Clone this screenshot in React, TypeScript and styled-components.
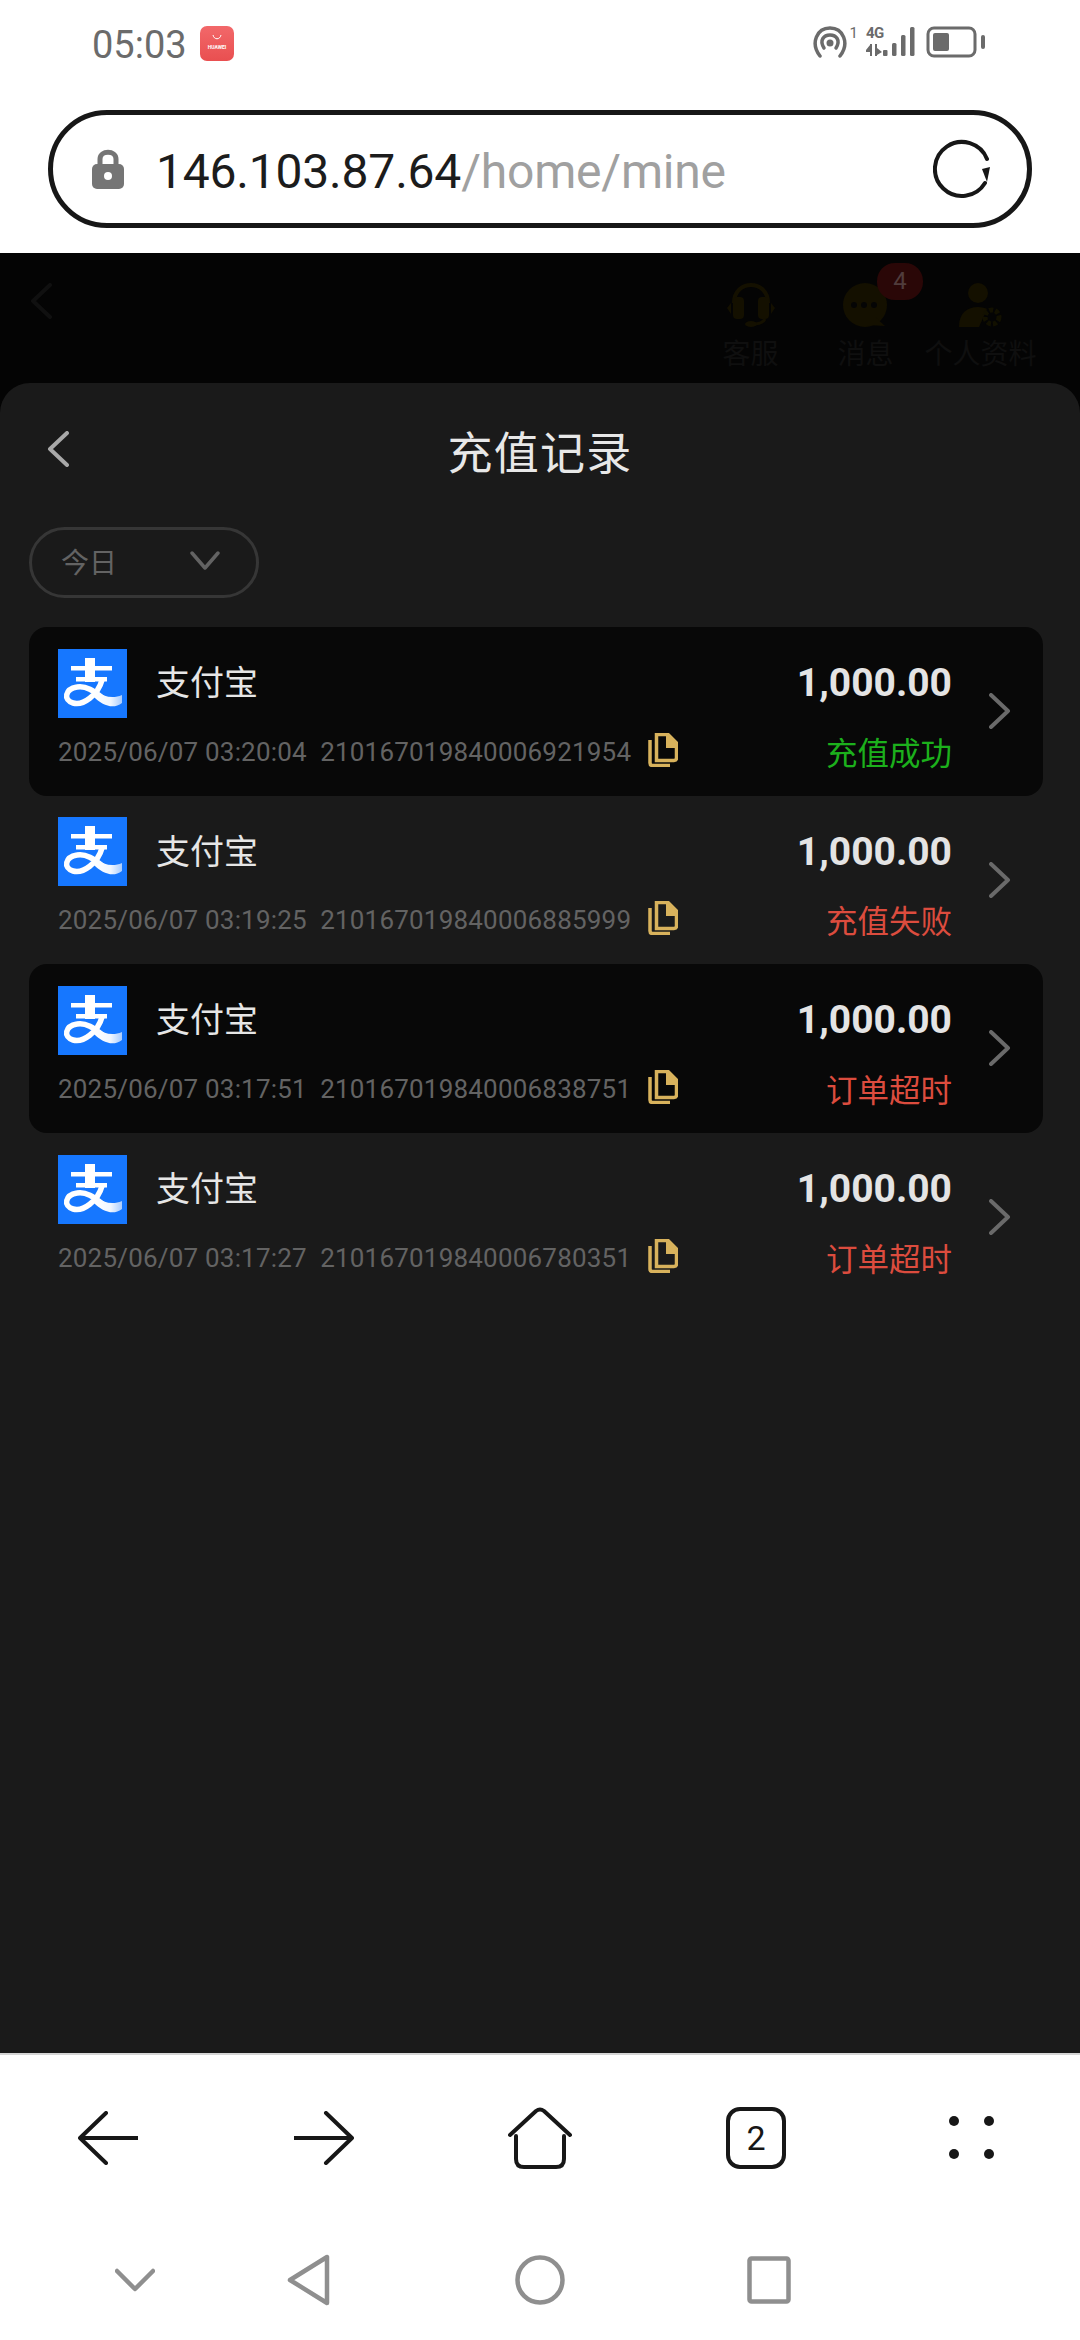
import styled, { createGlobalStyle } from 'styled-components';

const GlobalStyle = createGlobalStyle`
    html, body {
        margin: 0;
        padding: 0;
        background: #fff;
    }
    * {
        box-sizing: border-box;
    }
`;

const FONT = `Roboto, 'Noto Sans CJK SC', sans-serif`;

const Page = styled.div`
    width: 1080px;
    height: 2340px;
    display: flex;
    flex-direction: column;
    font-family: ${FONT};
    background: #fff;
    overflow: hidden;
`;

const StatusBar = styled.div`
    height: 88px;
    padding: 23px 0 0 92px;
    display: flex;
    align-items: flex-start;
`;

const Clock = styled.span`
    font-size: 38px;
    line-height: 44px;
    color: #6b6b6b;
    width: 108px;
`;

const AppBadge = styled.div`
    width: 34px;
    height: 35px;
    margin-top: 3px;
    border-radius: 7px;
    background: linear-gradient(#f2686a, #e94f50);
    color: #fff;
    font-size: 5px;
    font-weight: 700;
    line-height: 6px;
    display: flex;
    flex-direction: column;
    align-items: center;
    padding-top: 8px;
    gap: 4px;
`;

const StatusRight = styled.div`
    margin-left: auto;
    margin-right: 94px;
    margin-top: 3px;
    display: flex;
    align-items: flex-start;
`;

const UrlRow = styled.div`
    height: 165px;
    padding: 22px 48px 0 48px;
`;

const UrlBar = styled.div`
    height: 118px;
    border: 5px solid #171717;
    border-radius: 59px;
    display: flex;
    align-items: center;
    padding: 0 34px 0 39px;
`;

const UrlText = styled.div`
    margin-left: 32px;
    padding-top: 6px;
    font-size: 48px;
    line-height: 60px;
    letter-spacing: -0.2px;
    color: #a0a0a0;
    flex: 1;
    b {
        font-weight: 400;
        color: #1c1c1c;
    }
`;

const Backdrop = styled.div`
    height: 130px;
    background: #040404;
    display: flex;
    padding: 30px 42px 0 30px;
`;

const BackdropActions = styled.div`
    margin-left: auto;
    display: flex;
`;

const BackdropAction = styled.div<{ $width: number }>`
    width: ${(p) => p.$width}px;
    display: flex;
    flex-direction: column;
    align-items: center;
    gap: 10px;
    font-size: 28px;
    line-height: 36px;
    color: #0f0f0f;
    position: relative;
`;

const DimBadge = styled.span`
    position: absolute;
    left: 69px;
    top: -20px;
    width: 46px;
    height: 37px;
    border-radius: 18px;
    background: #2a0707;
    color: #503c3c;
    font-size: 24px;
    line-height: 37px;
    text-align: center;
`;

const Sheet = styled.div`
    flex: 1;
    background: #1a1a1a;
    border-radius: 30px 30px 0 0;
    padding: 0 37px 0 29px;
    display: flex;
    flex-direction: column;
`;

const SheetOuter = styled.div`
    flex: 1;
    display: flex;
    flex-direction: column;
    background: #040404;
`;

const SheetHeader = styled.div`
    height: 144px;
    display: flex;
    align-items: center;
    position: relative;
`;

const BackButton = styled.div`
    position: absolute;
    left: 18px;
    top: 48px;
    width: 22px;
    height: 36px;
`;

const Title = styled.h1`
    margin: 0 auto;
    padding: 0 0 0 8px;
    font-size: 45px;
    line-height: 56px;
    font-weight: 400;
    color: #e8e8e8;
    letter-spacing: 1.2px;
`;

const Filter = styled.div`
    width: 230px;
    height: 71px;
    border: 3px solid #363636;
    border-radius: 36px;
    display: flex;
    align-items: center;
    padding: 0 36px 3px 29px;
    justify-content: space-between;
    font-size: 28px;
    color: #636363;
`;

const List = styled.div`
    margin-top: 29px;
    display: flex;
    flex-direction: column;
`;

const Row = styled.div<{ $shaded: boolean }>`
    height: 168.6px;
    border-radius: 18px;
    background: ${(p) => (p.$shaded ? '#080808' : 'transparent')};
    display: flex;
    align-items: center;
    padding: 0 32px 0 29px;
`;

const RowBody = styled.div`
    flex: 1;
    display: flex;
    flex-direction: column;
    gap: 12px;
`;

const RowLine = styled.div`
    display: flex;
    align-items: center;
`;

const Method = styled.span`
    margin-left: 29px;
    font-size: 34px;
    line-height: 44px;
    color: #e6e6e6;
`;

const Amount = styled.span`
    margin-left: auto;
    font-size: 39px;
    font-weight: 700;
    line-height: 44px;
    color: #e4e4e4;
`;

const Meta = styled.span`
    font-size: 26px;
    line-height: 38px;
    letter-spacing: 0.2px;
    color: #636363;
    white-space: pre;
`;

const CopyButton = styled.span`
    margin: 0 0 4px 17px;
    width: 30px;
    height: 34px;
    display: flex;
`;

const StateLabel = styled.span<{ $ok: boolean }>`
    margin: 6px 0 0 auto;
    font-size: 31.5px;
    line-height: 38px;
    color: ${(p) => (p.$ok ? '#1cb01c' : '#dc4c3e')};
`;

const RowArrow = styled.span`
    margin-left: 37px;
    width: 22px;
    height: 36px;
    display: flex;
`;

const BottomBar = styled.div`
    height: 287px;
    background: #fff;
    border-top: 2px solid #d4d4d4;
    display: flex;
    flex-direction: column;
`;

const Toolbar = styled.div`
    height: 178px;
    display: grid;
    grid-template-columns: repeat(5, 216px);
    align-items: center;
    justify-items: center;
    padding-bottom: 12px;
`;

const NavKeys = styled.div`
    height: 107px;
    display: grid;
    grid-template-columns: 270px 78px 384px 74px;
    align-items: center;
    justify-items: center;
    padding-bottom: 14px;
`;

const TabCount = styled.div`
    width: 60px;
    height: 62px;
    border: 4px solid #171717;
    border-radius: 14px;
    font-size: 34px;
    line-height: 54px;
    text-align: center;
    color: #171717;
`;

const SmallLabel = styled.span`
    font-size: 15px;
    line-height: 15px;
    color: #6b6b6b;
    margin: 0 0 0 2px;
`;

const NetLabel = styled.span`
    font-size: 15px;
    line-height: 15px;
    font-weight: 700;
    letter-spacing: -0.5px;
    color: #6b6b6b;
`;

const NetColumn = styled.div`
    display: flex;
    flex-direction: column;
    gap: 3px;
    margin-left: 8px;
    width: 17px;
`;

const BatterySlot = styled.span`
    margin-left: 11px;
    display: flex;
`;

const orders = [
    { time: '2025/06/07 03:20:04', no: '210167019840006921954', state: '充值成功', ok: true },
    { time: '2025/06/07 03:19:25', no: '210167019840006885999', state: '充值失败', ok: false },
    { time: '2025/06/07 03:17:51', no: '210167019840006838751', state: '订单超时', ok: false },
    { time: '2025/06/07 03:17:27', no: '210167019840006780351', state: '订单超时', ok: false }
];

function AlipayLogo({ index }: { index: number }) {
    const tail = `ali-tail-${index}`;
    return (
        <svg width='69' height='69' viewBox='0 0 69 69'>
            <defs>
                <linearGradient id={tail} x1='0' x2='1' y1='0' y2='0'>
                    <stop offset='0' stopColor='#fff' />
                    <stop offset='0.6' stopColor='#f0f6ff' />
                    <stop offset='1' stopColor='#a8ccff' />
                </linearGradient>
            </defs>
            <rect width='69' height='69' fill='#1677ff' />
            <rect x='13' y='17' width='41' height='4.5' fill='#fff' />
            <rect x='18' y='28' width='31' height='4.5' fill='#fff' />
            <rect x='27' y='9' width='10' height='24' fill='#fff' />
            <path
                d='M44 31 C40 46 25 57 15 54 C5 51 7 40 19 38 C29 36 38 44 46 50'
                fill='none'
                stroke='#fff'
                strokeWidth='5.5'
            />
            <path d='M38 42 C46 48 55 50 64 46 L64 54 C55 61 44 56 36 48 Z' fill={`url(#${tail})`} />
        </svg>
    );
}

function CopyIcon() {
    return (
        <svg width='30' height='34' viewBox='0 0 30 34' fill='none'>
            <path d='M2 7 V30 Q2 32.5 4.5 32.5 H22' stroke='#d8b25c' strokeWidth='3.5' />
            <path d='M8.5 1.5 H20 L28.5 10 V25 Q28.5 27.5 26 27.5 H8.5 Z' stroke='#d8b25c' strokeWidth='3.5' />
            <path d='M18 1 L29 11 V15 H18 Z' fill='#d8b25c' />
        </svg>
    );
}

function Chevron({ color, dir, width = 4 }: { color: string; dir: 'left' | 'right'; width?: number }) {
    const d = dir === 'left' ? 'M20 2 L3 18 L20 34' : 'M2 2 L19 18 L2 34';
    return (
        <svg width='22' height='36' viewBox='0 0 22 36' fill='none'>
            <path d={d} stroke={color} strokeWidth={width} strokeLinecap='round' strokeLinejoin='round' />
        </svg>
    );
}

function HeadsetIcon() {
    return (
        <svg width='52' height='44' viewBox='0 0 52 44' fill='none'>
            <path d='M9 20 C9 -4 43 -4 43 20' stroke='#141000' strokeWidth='4' />
            <rect x='8' y='14' width='11' height='22' rx='4' fill='#141000' />
            <rect x='33' y='14' width='11' height='22' rx='4' fill='#141000' />
            <path d='M2 25 L6 20 V31 Z M50 25 L46 20 V31 Z' fill='#141000' />
            <path d='M40 36 C38 40 34 41 28 41' stroke='#141000' strokeWidth='3' />
            <ellipse cx='26' cy='41' rx='6' ry='3' fill='#141000' />
        </svg>
    );
}

function ChatIcon() {
    return (
        <svg width='46' height='44' viewBox='0 0 46 44'>
            <circle cx='22' cy='22' r='22' fill='#141000' />
            <path d='M32 34 L42 43 L24 42 Z' fill='#141000' />
            <circle cx='11' cy='22' r='3' fill='#050505' />
            <circle cx='21' cy='22' r='3' fill='#050505' />
            <circle cx='31' cy='22' r='3' fill='#050505' />
        </svg>
    );
}

function PersonIcon() {
    return (
        <svg width='44' height='44' viewBox='0 0 44 44'>
            <circle cx='19' cy='10' r='10' fill='#141000' />
            <path d='M0 44 C0 30 8 24 19 24 C23 24 26 25 28 26 L20 44 Z' fill='#141000' />
            <circle cx='33' cy='34' r='7' fill='none' stroke='#121000' strokeWidth='5' strokeDasharray='4 2' />
        </svg>
    );
}

function HotspotIcon() {
    return (
        <svg width='36' height='32' viewBox='0 0 36 32' fill='none' stroke='#6b6b6b' strokeWidth='3.5' strokeLinecap='round'>
            <path d='M8 30 C-2 17 5 2 18 2 C31 2 38 17 28 30' />
            <path d='M12 22 C7 14 12 9 18 9 C24 9 29 14 24 22' />
            <circle cx='18' cy='17' r='3.5' fill='#6b6b6b' stroke='none' />
        </svg>
    );
}

function TransferIcon() {
    return (
        <svg width='17' height='12' viewBox='0 0 17 12' fill='#6b6b6b'>
            <path d='M4 0 V12 H6 V0 Z M0 6 L4 1 V8 H0 Z' />
            <path d='M9 0 H11 V12 H9 Z M11 4 L16 8 L11 11 Z' />
        </svg>
    );
}

function SignalIcon() {
    return (
        <svg width='32' height='32' viewBox='0 0 32 32' fill='#6b6b6b'>
            <rect x='0' y='24' width='4.5' height='6' rx='1' />
            <rect x='9' y='17' width='4.5' height='13' rx='1.5' />
            <rect x='18' y='9' width='4.5' height='21' rx='1.5' />
            <rect x='27' y='1' width='4.5' height='29' rx='1.5' />
        </svg>
    );
}

function BatteryIcon() {
    return (
        <svg width='60' height='32' viewBox='0 0 60 32'>
            <rect x='2' y='2' width='47' height='28' rx='6' fill='none' stroke='#6b6b6b' strokeWidth='3' />
            <rect x='7' y='7' width='16' height='18' rx='2' fill='#6b6b6b' />
            <rect x='55' y='9' width='4' height='14' rx='2' fill='#6b6b6b' />
        </svg>
    );
}

function SmileMark() {
    return (
        <svg width='12' height='6' viewBox='0 0 12 6' fill='none'>
            <path d='M2 1 C3 6 9 6 10 1' stroke='#fff' strokeWidth='1' />
        </svg>
    );
}

function LockIcon() {
    return (
        <svg width='32' height='40' viewBox='0 0 32 40'>
            <path d='M8 18 V10 C8 1 24 1 24 10 V18' fill='none' stroke='#757575' strokeWidth='5' />
            <rect x='0' y='15' width='32' height='25' rx='5' fill='#757575' />
            <circle cx='16' cy='27' r='4' fill='#fff' />
        </svg>
    );
}

function ReloadIcon() {
    return (
        <svg width='60' height='60' viewBox='0 0 60 60' fill='none'>
            <path d='M52 44 A27 27 0 1 1 54 20' stroke='#171717' strokeWidth='4' strokeLinecap='round' />
            <path d='M49 30 L57 28 L54 43 Z' fill='#171717' />
        </svg>
    );
}

function ToolArrow({ dir }: { dir: 'left' | 'right' }) {
    const d = dir === 'left' ? 'M28 2 L2 27 L28 52 M2 27 H60' : 'M32 2 L58 27 L32 52 M58 27 H0';
    return (
        <svg width='60' height='54' viewBox='0 0 60 54' fill='none'>
            <path d={d} stroke='#171717' strokeWidth='4' strokeLinecap='round' strokeLinejoin='round' />
        </svg>
    );
}

function HomeIcon() {
    return (
        <svg width='64' height='62' viewBox='0 0 64 62' fill='none' stroke='#171717' strokeWidth='4' strokeLinecap='round' strokeLinejoin='round'>
            <path d='M2 28 L28 4 Q32 1 36 4 L62 28' />
            <path d='M8 29 V52 Q8 60 16 60 H48 Q56 60 56 52 V29' />
        </svg>
    );
}

function MoreIcon() {
    return (
        <svg width='46' height='44' viewBox='0 0 46 44' fill='#171717'>
            <circle cx='5' cy='5' r='5' />
            <circle cx='40' cy='5' r='5' />
            <circle cx='5' cy='38' r='5' />
            <circle cx='40' cy='38' r='5' />
        </svg>
    );
}

function KeyVee() {
    return (
        <svg width='40' height='24' viewBox='0 0 40 24' fill='none'>
            <path d='M2 3 L20 21 L38 3' stroke='#8f8f8f' strokeWidth='4.5' strokeLinecap='round' strokeLinejoin='round' />
        </svg>
    );
}

function KeyBack() {
    return (
        <svg width='44' height='52' viewBox='0 0 44 52' fill='none'>
            <path d='M40 3 V49 L3 26 Z' stroke='#8f8f8f' strokeWidth='4.5' strokeLinejoin='round' />
        </svg>
    );
}

function KeyHome() {
    return (
        <svg width='50' height='52' viewBox='0 0 50 52' fill='none'>
            <circle cx='25' cy='26' r='22.5' stroke='#8f8f8f' strokeWidth='4.5' />
        </svg>
    );
}

function KeyRecent() {
    return (
        <svg width='44' height='48' viewBox='0 0 44 48' fill='none'>
            <rect x='2.5' y='2.5' width='39' height='43' rx='2' stroke='#8f8f8f' strokeWidth='4.5' />
        </svg>
    );
}

export default function App() {
    return (
        <Page>
            <GlobalStyle />
            <StatusBar>
                <Clock>05:03</Clock>
                <AppBadge>
                    <SmileMark />
                    HUAWEI
                </AppBadge>
                <StatusRight>
                    <HotspotIcon />
                    <SmallLabel>1</SmallLabel>
                    <NetColumn>
                        <NetLabel>4G</NetLabel>
                        <TransferIcon />
                    </NetColumn>
                    <SignalIcon />
                    <BatterySlot>
                        <BatteryIcon />
                    </BatterySlot>
                </StatusRight>
            </StatusBar>
            <UrlRow>
                <UrlBar>
                    <LockIcon />
                    <UrlText>
                        <b>146.103.87.64</b>/home/mine
                    </UrlText>
                    <ReloadIcon />
                </UrlBar>
            </UrlRow>
            <Backdrop>
                <Chevron color='#101010' dir='left' />
                <BackdropActions>
                    <BackdropAction $width={115}>
                        <HeadsetIcon />
                        客服
                    </BackdropAction>
                    <BackdropAction $width={115}>
                        <ChatIcon />
                        <DimBadge>4</DimBadge>
                        消息
                    </BackdropAction>
                    <BackdropAction $width={115}>
                        <PersonIcon />
                        个人资料
                    </BackdropAction>
                </BackdropActions>
            </Backdrop>
            <SheetOuter>
                <Sheet>
                    <SheetHeader>
                        <BackButton>
                            <Chevron color='#a8a8a8' dir='left' />
                        </BackButton>
                        <Title>充值记录</Title>
                    </SheetHeader>
                    <Filter>
                        今日
                        <svg width='30' height='20' viewBox='0 0 30 20' fill='none'>
                            <path d='M2 2 L15 17 L28 2' stroke='#636363' strokeWidth='3.5' strokeLinecap='round' strokeLinejoin='round' />
                        </svg>
                    </Filter>
                    <List>
                        {orders.map((order, index) => (
                            <Row key={order.no} $shaded={index % 2 === 0}>
                                <RowBody>
                                    <RowLine>
                                        <AlipayLogo index={index} />
                                        <Method>支付宝</Method>
                                        <Amount>1,000.00</Amount>
                                    </RowLine>
                                    <RowLine>
                                        <Meta>
                                            {order.time}
                                            {'  '}
                                            {order.no}
                                        </Meta>
                                        <CopyButton>
                                            <CopyIcon />
                                        </CopyButton>
                                        <StateLabel $ok={order.ok}>{order.state}</StateLabel>
                                    </RowLine>
                                </RowBody>
                                <RowArrow>
                                    <Chevron color='#6a6a6a' dir='right' />
                                </RowArrow>
                            </Row>
                        ))}
                    </List>
                </Sheet>
            </SheetOuter>
            <BottomBar>
                <Toolbar>
                    <ToolArrow dir='left' />
                    <ToolArrow dir='right' />
                    <HomeIcon />
                    <TabCount>2</TabCount>
                    <MoreIcon />
                </Toolbar>
                <NavKeys>
                    <KeyVee />
                    <KeyBack />
                    <KeyHome />
                    <KeyRecent />
                </NavKeys>
            </BottomBar>
        </Page>
    );
}
